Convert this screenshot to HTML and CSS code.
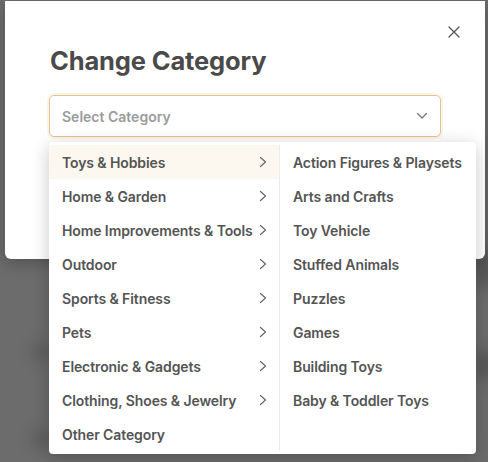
FILE: index.html
```html
<!DOCTYPE html>
<html>
<head>
<meta charset="utf-8">
<link rel="stylesheet" href="styles.css">
</head>
<body>
<div class="backdrop">
  <span class="blob b1"></span>
  <span class="blob b2"></span>
  <span class="blob b3"></span>
  <span class="blob b4"></span>
</div>
<div class="modal">
  <button class="close" aria-label="Close">
    <svg width="12" height="12" viewBox="0 0 12 12"><path d="M1 1L11 11M11 1L1 11" stroke="#555" stroke-width="1.3" fill="none" stroke-linecap="round"/></svg>
  </button>
  <h1 class="title">Change Category</h1>
  <div class="select">
    <span class="placeholder">Select Category</span>
    <svg class="chev-down" width="12" height="8" viewBox="0 0 12 8"><path d="M1.5 1.5L6 6L10.5 1.5" stroke="#777" stroke-width="1.3" fill="none" stroke-linecap="round" stroke-linejoin="round"/></svg>
  </div>
</div>
<div class="dropdown">
  <ul class="col col-main">
    <li class="item active"><span>Toys &amp; Hobbies</span><svg class="chev" width="8" height="12" viewBox="0 0 8 12"><path d="M1.5 1.5L6.5 6L1.5 10.5" stroke="#666" stroke-width="1.2" fill="none" stroke-linecap="round" stroke-linejoin="round"/></svg></li>
    <li class="item"><span>Home &amp; Garden</span><svg class="chev" width="8" height="12" viewBox="0 0 8 12"><path d="M1.5 1.5L6.5 6L1.5 10.5" stroke="#666" stroke-width="1.2" fill="none" stroke-linecap="round" stroke-linejoin="round"/></svg></li>
    <li class="item"><span>Home Improvements &amp; Tools</span><svg class="chev" width="8" height="12" viewBox="0 0 8 12"><path d="M1.5 1.5L6.5 6L1.5 10.5" stroke="#666" stroke-width="1.2" fill="none" stroke-linecap="round" stroke-linejoin="round"/></svg></li>
    <li class="item"><span>Outdoor</span><svg class="chev" width="8" height="12" viewBox="0 0 8 12"><path d="M1.5 1.5L6.5 6L1.5 10.5" stroke="#666" stroke-width="1.2" fill="none" stroke-linecap="round" stroke-linejoin="round"/></svg></li>
    <li class="item"><span>Sports &amp; Fitness</span><svg class="chev" width="8" height="12" viewBox="0 0 8 12"><path d="M1.5 1.5L6.5 6L1.5 10.5" stroke="#666" stroke-width="1.2" fill="none" stroke-linecap="round" stroke-linejoin="round"/></svg></li>
    <li class="item"><span>Pets</span><svg class="chev" width="8" height="12" viewBox="0 0 8 12"><path d="M1.5 1.5L6.5 6L1.5 10.5" stroke="#666" stroke-width="1.2" fill="none" stroke-linecap="round" stroke-linejoin="round"/></svg></li>
    <li class="item"><span>Electronic &amp; Gadgets</span><svg class="chev" width="8" height="12" viewBox="0 0 8 12"><path d="M1.5 1.5L6.5 6L1.5 10.5" stroke="#666" stroke-width="1.2" fill="none" stroke-linecap="round" stroke-linejoin="round"/></svg></li>
    <li class="item"><span>Clothing, Shoes &amp; Jewelry</span><svg class="chev" width="8" height="12" viewBox="0 0 8 12"><path d="M1.5 1.5L6.5 6L1.5 10.5" stroke="#666" stroke-width="1.2" fill="none" stroke-linecap="round" stroke-linejoin="round"/></svg></li>
    <li class="item"><span>Other Category</span></li>
  </ul>
  <ul class="col col-sub">
    <li class="item">Action Figures &amp; Playsets</li>
    <li class="item">Arts and Crafts</li>
    <li class="item">Toy Vehicle</li>
    <li class="item">Stuffed Animals</li>
    <li class="item">Puzzles</li>
    <li class="item">Games</li>
    <li class="item">Building Toys</li>
    <li class="item">Baby &amp; Toddler Toys</li>
  </ul>
</div>
</body>
</html>
```

FILE: styles.css
```css
* { box-sizing: border-box; }
html, body { margin: 0; padding: 0; }
body {
  width: 488px;
  height: 462px;
  overflow: hidden;
  background: #6c6c6c;
  font-family: Inter, "Noto Sans", sans-serif;
  position: relative;
}
.backdrop { position: absolute; inset: 0; overflow: hidden; }
.blob {
  position: absolute;
  background: #3a3a3a;
  border-radius: 50%;
  filter: blur(8px);
  opacity: 0.5;
}
.b1 { left: 32px; top: 345px; width: 20px; height: 14px; }
.b2 { left: 32px; top: 432px; width: 20px; height: 14px; }
.b3 { left: 476px; top: 250px; width: 20px; height: 40px; }
.b4 { left: 476px; top: 350px; width: 20px; height: 30px; }

.modal {
  position: relative;
  margin: 1px 3px 0 5px;
  height: 258px;
  background: #fff;
  border-radius: 0 0 6px 6px;
  padding: 44px 44px 0 44px;
  box-shadow: 0 4px 16px rgba(0,0,0,0.25);
}
.close {
  position: absolute;
  top: 24px;
  right: 24px;
  width: 14px;
  height: 14px;
  padding: 1px;
  border: 0;
  background: none;
  display: flex;
  align-items: center;
  justify-content: center;
}
.title {
  margin: 0 0 0 1px;
  font-size: 25.5px;
  line-height: 32px;
  font-weight: 700;
  color: #4a4a4a;
  letter-spacing: -0.15px;
}
.select {
  margin-top: 18px;
  height: 42px;
  border: 1px solid #e6c28c;
  border-radius: 5px;
  box-shadow: 0 0 0 2px rgba(240, 200, 140, 0.18);
  display: flex;
  align-items: center;
  justify-content: space-between;
  padding: 0 12px 0 12px;
}
.placeholder {
  font-size: 14px;
  font-weight: 600;
  color: #9b9b9b;
}
.chev-down { margin-right: 0; }

.dropdown {
  position: absolute;
  left: 49px;
  top: 142px;
  width: 427px;
  height: 312px;
  background: #fff;
  border-radius: 4px;
  box-shadow: 0 4px 18px rgba(0,0,0,0.22);
  display: flex;
  padding: 3px 0 3px;
}
.col {
  list-style: none;
  margin: 0;
  padding: 0;
}
.col-main {
  width: 231px;
  border-right: 1px solid #ececec;
}
.col-sub { flex: 1; }
.item {
  height: 34px;
  display: flex;
  align-items: center;
  justify-content: space-between;
  font-size: 14px;
  font-weight: 600;
  color: #545454;
  white-space: nowrap;
  letter-spacing: -0.1px;
}
.col-main .item { padding: 0 12px 0 13px; }
.col-sub .item { padding: 0 12px 0 13px; }
.item.active { background: #fdf8ef; }
.chev { flex: none; }
```
